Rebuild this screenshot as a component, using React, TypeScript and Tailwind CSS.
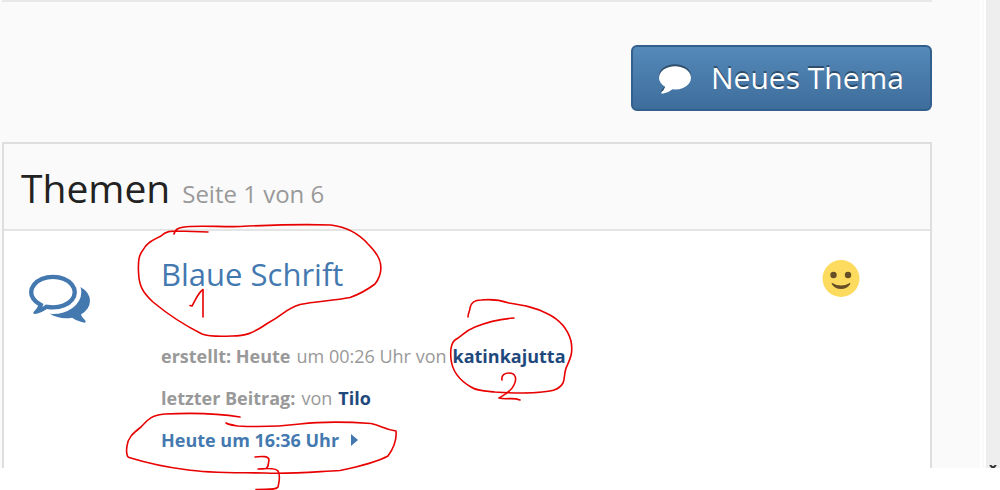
import type { ReactNode } from 'react';

const topic = {
  title: 'Blaue Schrift',
  created: { day: 'Heute', time: 'um 00:26 Uhr', author: 'katinkajutta' },
  lastPost: { author: 'Tilo', time: 'Heute um 16:36 Uhr' },
};

const CommentIcon = ({ className }: { className: string }) => (
  <svg viewBox="0 0 1792 1792" fill="currentColor" className={className} aria-hidden="true">
    <path d="M1792 896q0 174-120 321.5t-326 233-450 85.5q-70 0-145-8-198 175-460 225-49 14-114 22-17 2-30.5-9t-17.5-29v-1q-3-4-.5-12t2-10 4.5-9.5l6-9 7-8.5 8-9q7-8 31-34.5t34.5-38 31-39.5 32.5-51 27-59 26-76q-157-89-247.5-220t-90.5-281q0-130 71-248.5t191-204.5 286-136.5 348-50.5 348 50.5 286 136.5 191 204.5 71 248.5z" />
  </svg>
);

const CommentsIcon = ({ className }: { className: string }) => (
  <svg viewBox="0 0 1792 1792" fill="currentColor" className={className} aria-hidden="true">
    <path d="M704 384q-153 0-286 52t-211.5 141-78.5 191q0 82 53 158t149 132l97 56-35 84q34-20 62-39l44-31 53 10q78 14 153 14 153 0 286-52t211.5-141 78.5-191-78.5-191-211.5-141-286-52zm0-128q191 0 353.5 68.5t256.5 186.5 94 257-94 257-256.5 186.5-353.5 68.5q-86 0-176-16-124 88-278 128-36 9-86 16h-3q-11 0-20.5-8t-11.5-21q-1-3-1-6.5t.5-6.5 2-6l2.5-5 3.5-5.5 4-5 4.5-5 4-4.5q5-6 23-25t26-29.5 22.5-29 25-38.5 20.5-44q-124-72-195-177t-71-224q0-139 94-257t256.5-186.5 353.5-68.5zm822 1169q10 24 20.5 44t25 38.5 22.5 29 26 29.5 23 25q1 1 4 4.5t4.5 5 4 5 3.5 5.5l2.5 5 2 6 .5 6.5-1 6.5q-3 14-13 22t-22 7q-50-7-86-16-154-40-278-128-90 16-176 16-271 0-472-132 58 4 88 4 161 0 309-45t264-129q125-92 192-212t67-254q0-77-23-152 129 71 204 178t75 230q0 120-71 224.5t-195 176.5z" />
  </svg>
);

const Smiley = () => (
  <svg viewBox="0 0 38 38" className="size-[38px] shrink-0" role="img" aria-label="Smiley">
    <circle cx="19" cy="18.500" r="18.5" fill="#fddb5e" />
    <circle cx="11.5" cy="15" r="3.2" fill="#664e27" />
    <circle cx="26" cy="15" r="3.2" fill="#664e27" />
    <path d="M10.200 23q8.800 5 17.600 0q.8-.2.5 1q-3 5-9.300 5t-9.300-5q-.3-1.200.5-1z" fill="#664e27" />
  </svg>
);

const UserLink = ({ children }: { children: ReactNode }) => (
  <a href="#" className="font-bold text-[#1f497d]">{children}</a>
);

// Red pen marks drawn over the list
const Annotations = () => (
  <svg
    viewBox="0 0 1000 490"
    className="pointer-events-none absolute top-0 left-0 h-[490px] w-[1000px]"
    fill="none"
    stroke="#e80000"
    strokeWidth="1.6"
    strokeLinecap="round"
    strokeLinejoin="round"
    aria-hidden="true"
  >
    <path d="M174 234C175 229 179 227 190 226.500C205 225.500 222 227 240 226.500C270 225 305 224 331 225C347 227 360 235 368 244C375 251 380 259 380.500 264C382 272 378 280 375 284C367 290 360 294 350 297.500C333 301 315 301 300 304.500C285 309 285 314 268 323C252 334 245 336 232 336C222 336.500 210 337 202 334C184 325 165 312 153 302C142 292 139 285 138.500 272C138 260 139 255 143 250C147 242 155 239 161 236C166 231 171 231 177 231L208 232" />
    <path d="M190 305.500L192 306C196 299 198 293 203 289.500V317" />
    <path d="M468 317C468 313 470 311 470 308C471 302 475 300 481 300C491 299 500 300 509 303C522 305 535 307 548 314C562 321 568 330 571 341C573 352 571 357 567 366C564 371 565 379 563 383C559 390 552 391 542 392C525 394 510 393 495 392C484 391 477 391 471 387C459 380 452 370 451 359C450 349 451 343 455 340C463 335 465 331 475 327C490 321 500 319 514 318" />
    <path d="M502 380C501 375 505 373 509 373C516 373 517 379 514 385C511 392 504 395 499 398C506 400 513 397 520 400" />
    <path d="M240 417C222 414 195 412.500 165 414C150 415 147 421 141 427C132 434 128 438 127 446C126 452 127 457 129 457.500C147 463 165 467 185 469.500C210 473.500 235 472.500 265 473C295 474 317 471.500 340 470.500C357 467 375 463 388 456C393 449 397 440 396 431C385 429.500 380 425 371 423.500C350 422 326 421 300 424C275 427 255 427 238 426C232 425 228 424.500 226 423" />
    <path d="M255 457C262 456 269 456 269 460C268 464 269 467 266 468.500C263 469 260 469 258 469C268 468 276 468 278 471C281 476 279 482 278 487C276 490 270 489 256 489.500" />
  </svg>
);

const App = () => {
  return (
    <div className="relative min-h-screen overflow-hidden bg-white font-['Open_Sans','Noto_Sans',sans-serif] text-lg leading-6 text-[#999999]">
      <div className="flex bg-[#fafafa]">
        <main className="ml-0.5 flex-1">
          <div className="h-0.5 bg-[#e8e8e8]" />

          <div className="mt-[43px] mb-[31px] flex justify-end">
            <button
              type="button"
              className="flex h-[66px] items-center gap-5 rounded-md border-2 border-[#325f8c] bg-linear-to-b from-[#5489b9] to-[#3e6d9b] px-[26px] text-[30px] leading-none text-white text-shadow-[0_-2px_0_rgba(0,0,0,0.4)]"
            >
              <CommentIcon className="size-8 drop-shadow-[0_-2px_0_rgba(0,0,0,0.4)]" />
              Neues Thema
            </button>
          </div>

          <section className="border-x-2 border-t-2 border-[#dedede]">
            <header className="flex items-baseline gap-3 border-b-2 border-[#e4e4e4] px-[17px] pt-5 pb-[17px]">
              <h2 className="text-[39px] leading-[48px] text-[#222222]">Themen</h2>
              <span className="text-2xl">Seite 1 von 6</span>
            </header>

            <article className="flex items-start bg-white pr-[70px] pb-4 pl-[25px]">
              <CommentsIcon className="mt-[35px] mr-[71px] size-[61px] shrink-0 text-[#4479b0]" />
              <div className="flex-1 pt-[21px]">
                <h3 className="mb-12 text-[31px] leading-[44px] text-[#4479b0]">
                  <a href="#">{topic.title}</a>
                </h3>
                <p className="mb-[18px] flex gap-1.5">
                  <strong>erstellt: {topic.created.day}</strong>
                  <span>{topic.created.time} von</span>
                  <UserLink>{topic.created.author}</UserLink>
                </p>
                <p className="mb-[18px] flex gap-1.5">
                  <strong>letzter Beitrag:</strong>
                  <span>von</span>
                  <UserLink>{topic.lastPost.author}</UserLink>
                </p>
                <a href="#" className="flex items-center gap-3 font-bold text-[#4479b0]">
                  {topic.lastPost.time}
                  <svg viewBox="0 0 7 12" className="h-3 w-[7px]" fill="currentColor" aria-hidden="true">
                    <path d="M0 0l7 6-7 6z" />
                  </svg>
                </a>
              </div>
              <div className="pt-[29px]">
                <Smiley />
              </div>
            </article>
          </section>
        </main>

        {/* Page margin and scrollbar track */}
        <div className="ml-12 w-0.5 bg-white" />
        <div className="ml-0.5 w-0.5 bg-white" />
        <div className="flex w-3.5 items-end justify-center bg-[#eeeeee]">
          <svg viewBox="0 0 8 3" className="h-[3px] w-2" fill="none" stroke="#333333" strokeWidth="2" aria-hidden="true">
            <path d="M1 0l3 3 3-3" />
          </svg>
        </div>
      </div>
      <Annotations />
    </div>
  );
};

export default App;
